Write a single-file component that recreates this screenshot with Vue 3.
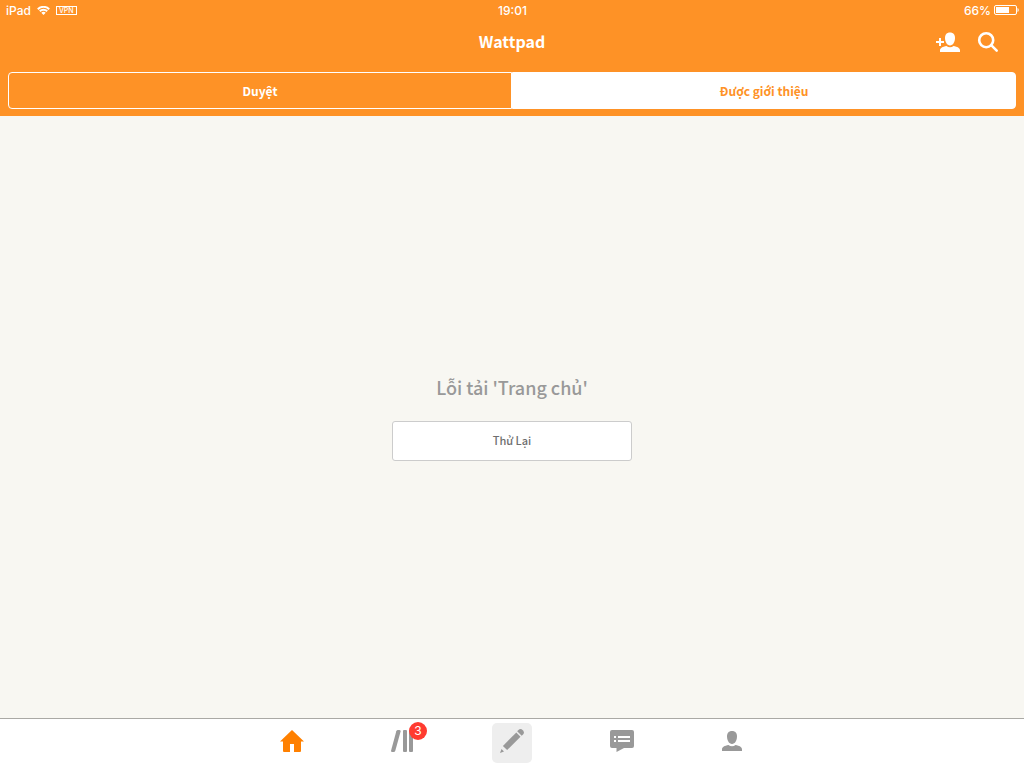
<script setup>
import { ref } from "vue";

const segments = ["Duyệt", "Được giới thiệu"];
const activeSegment = ref(1);

const tabs = [
  { id: "home", label: "Trang chủ" },
  { id: "library", label: "Thư viện", badge: 3 },
  { id: "write", label: "Viết" },
  { id: "messages", label: "Tin nhắn" },
  { id: "profile", label: "Hồ sơ" },
];
const activeTab = ref("home");
</script>

<template>
  <div class="screen">
    <header class="header">
      <div class="status">
        <div class="status-side">
          <span>iPad</span>
          <svg class="wifi" viewBox="0 0 13 9" width="13" height="9">
            <path d="M0.8 3.2a8.1 8.1 0 0 1 11.4 0M2.8 5.3a5.2 5.2 0 0 1 7.4 0" />
            <path class="wifi-dot" d="M6.5 9L4.3 6.8a3.1 3.1 0 0 1 4.4 0z" />
          </svg>
          <span class="vpn">VPN</span>
        </div>
        <span class="clock">19:01</span>
        <div class="status-side right">
          <span>66%</span>
          <svg viewBox="0 0 25 10" width="25" height="10">
            <rect x="0.5" y="0.5" width="22" height="9" rx="1.5" fill="none" stroke="#fff" />
            <rect x="2" y="2" width="13" height="6" fill="#fff" />
            <path d="M23.5 3c1.6 0.6 1.6 3.4 0 4z" fill="#fff" />
          </svg>
        </div>
      </div>

      <div class="nav">
        <h1 class="title">Wattpad</h1>
        <div class="actions">
          <button class="action" aria-label="Thêm bạn">
            <svg viewBox="0 0 24 24" width="24" height="24">
              <path d="M3 8h2v3h3v2H5v3H3v-3H0v-2h3z" />
              <path
                d="M14 2.500c3.300 0 5 2.100 5 5.500 0 3.800-2.100 7.500-5 7.500s-5-3.700-5-7.500c0-3.400 1.700-5.500 5-5.500z"
              />
              <path
                d="M4 22v-1.500c0-2.500 2.600-3.700 6.500-4.500 1 .8 2.200 1.200 3.500 1.200s2.500-.4 3.500-1.200c3.900.8 6.500 2 6.500 4.500V22z"
              />
            </svg>
          </button>
          <button class="action" aria-label="Tìm kiếm">
            <svg class="search" viewBox="0 0 24 24" width="24" height="24">
              <circle cx="10.200" cy="10.200" r="7" />
              <path d="M15.200 15.200l5.500 5.500" />
            </svg>
          </button>
        </div>
      </div>

      <div class="segments">
        <button
          v-for="(name, i) in segments"
          :key="name"
          class="segment"
          :class="{ active: activeSegment === i }"
          @click="activeSegment = i"
        >
          {{ name }}
        </button>
      </div>
    </header>

    <main class="content">
      <p class="message">Lỗi tải 'Trang chủ'</p>
      <button class="retry">Thử Lại</button>
    </main>

    <nav class="tabbar">
      <button
        v-for="tab in tabs"
        :key="tab.id"
        class="tab"
        :class="{ active: activeTab === tab.id, write: tab.id === 'write' }"
        :aria-label="tab.label"
        @click="activeTab = tab.id"
      >
        <svg viewBox="0 0 24 24" width="24" height="24">
          <path
            v-if="tab.id === 'home'"
            d="M12 1l12 11.500h-3V22q0 1-1 1h-6v-8h-4v8H4q-1 0-1-1v-9.500H0z"
          />
          <template v-else-if="tab.id === 'library'">
            <path
              d="M6.300 2.300Q6.700 1 8 1h1.500Q11 1 10.600 2.500L5.300 21.700Q4.900 23 3.600 23H2.200Q.7 23 1.100 21.500z"
            />
            <rect x="13" y="1" width="4" height="22" rx="1" />
            <rect x="19" y="1" width="4" height="22" rx="1" />
          </template>
          <template v-else-if="tab.id === 'write'">
            <path d="M18.200 1.200a3.100 3.100 0 0 1 4.600 4.600L21.700 6.800 17.200 2.300z" />
            <path d="M16.300 3.600l4.200 4.200L7.100 21.100l-4.200-4.200z" />
            <path d="M1.500 20l2.500 2.500L0 24z" />
          </template>
          <template v-else-if="tab.id === 'messages'">
            <path
              fill-rule="evenodd"
              d="M2 1h20a2 2 0 0 1 2 2v14a2 2 0 0 1-2 2h-8l-7.500 4V19H2a2 2 0 0 1-2-2V3a2 2 0 0 1 2-2zM4 7v2h2V7zm4 0v2h12V7zm-4 4v2h2v-2zm4 0v2h12v-2z"
            />
          </template>
          <template v-else>
            <path
              d="M12 2c3.400 0 5 2.100 5 5.500 0 3.800-2.100 7.500-5 7.500s-5-3.700-5-7.500C7 4.100 8.600 2 12 2z"
            />
            <path
              d="M2 22v-1.500c0-2.500 2.600-3.700 6.500-4.500 1 .8 2.200 1.200 3.500 1.200s2.500-.4 3.500-1.200c3.900.8 6.500 2 6.500 4.500V22z"
            />
          </template>
        </svg>
        <span v-if="tab.badge" class="badge">{{ tab.badge }}</span>
      </button>
    </nav>
  </div>
</template>

<style>
body {
  margin: 0;
}
</style>

<style scoped>
.screen {
  display: flex;
  flex-direction: column;
  min-height: 100vh;
  background: #f8f7f2;
  font-family: "Noto Sans CJK SC", "Noto Sans", sans-serif;
}

button {
  padding: 0;
  border: none;
  background: none;
  color: inherit;
  font-family: inherit;
  cursor: pointer;
}

svg {
  display: block;
}

.header {
  background: #fe9226;
  color: #fff;
}

.status {
  display: flex;
  align-items: center;
  height: 20px;
  padding: 0 5px 0 6px;
  font-family: Inter, "Liberation Sans", sans-serif;
  font-size: 12px;
  font-weight: 500;
}

.status-side {
  display: flex;
  flex: 1;
  align-items: center;
  gap: 6px;
}

.status-side.right {
  justify-content: flex-end;
  gap: 3px;
}

.clock {
  font-size: 12px;
}

.wifi {
  fill: none;
  stroke: #fff;
  stroke-width: 2;
}

.wifi-dot {
  fill: #fff;
  stroke: none;
}

.vpn {
  padding: 0 2px;
  border: 1px solid #fff;
  font-size: 7px;
  line-height: 7px;
}

.nav {
  display: grid;
  grid-template-columns: 1fr auto 1fr;
  align-items: center;
  height: 44px;
  padding: 0 24px;
}

.title {
  grid-column: 2;
  margin: 0;
  padding-bottom: 2px;
  font-size: 16px;
  font-weight: 700;
  line-height: 24px;
}

.actions {
  display: flex;
  justify-content: flex-end;
  gap: 16px;
}

.action svg {
  fill: currentColor;
}

.action .search {
  fill: none;
  stroke: currentColor;
  stroke-width: 2.6;
  stroke-linecap: round;
}

.segments {
  display: grid;
  grid-template-columns: 1fr 1fr;
  margin: 0 8px;
  padding-top: 8px;
  padding-bottom: 7px;
}

.segment {
  height: 37px;
  border: 1px solid #fff;
  font-size: 12px;
  font-weight: 700;
  line-height: 20px;
}

.segment:first-child {
  border-radius: 4px 0 0 4px;
}

.segment:last-child {
  border-radius: 0 4px 4px 0;
}

.segment.active {
  background: #fff;
  color: #fe9226;
}

.content {
  display: flex;
  flex: 1;
  flex-direction: column;
  align-items: center;
  justify-content: center;
  gap: 20px;
}

.message {
  margin: 0;
  color: #999;
  font-size: 18px;
  font-weight: 500;
  line-height: 28px;
}

.retry {
  width: 240px;
  height: 40px;
  padding-bottom: 2px;
  border: 1px solid #ccc;
  border-radius: 3px;
  background: #fff;
  color: #6f6f6f;
  font-size: 11px;
  font-weight: 500;
}

.tabbar {
  display: flex;
  justify-content: center;
  gap: 70px;
  padding: 4px 0 5px;
  border-top: 1px solid #aaa9a5;
  background: #fff;
}

.tab {
  position: relative;
  display: flex;
  justify-content: center;
  width: 40px;
  height: 40px;
  padding-top: 6px;
  border-radius: 5px;
  color: #999;
}

.tab svg {
  fill: currentColor;
}

.tab.active {
  color: #ff8000;
}

.tab.write {
  background: #eee;
}

.badge {
  position: absolute;
  top: -1px;
  right: -5px;
  width: 18px;
  border-radius: 9px;
  background: #ff3b30;
  color: #fff;
  font-family: Inter, "Liberation Sans", sans-serif;
  font-size: 12px;
  line-height: 18px;
}
</style>
